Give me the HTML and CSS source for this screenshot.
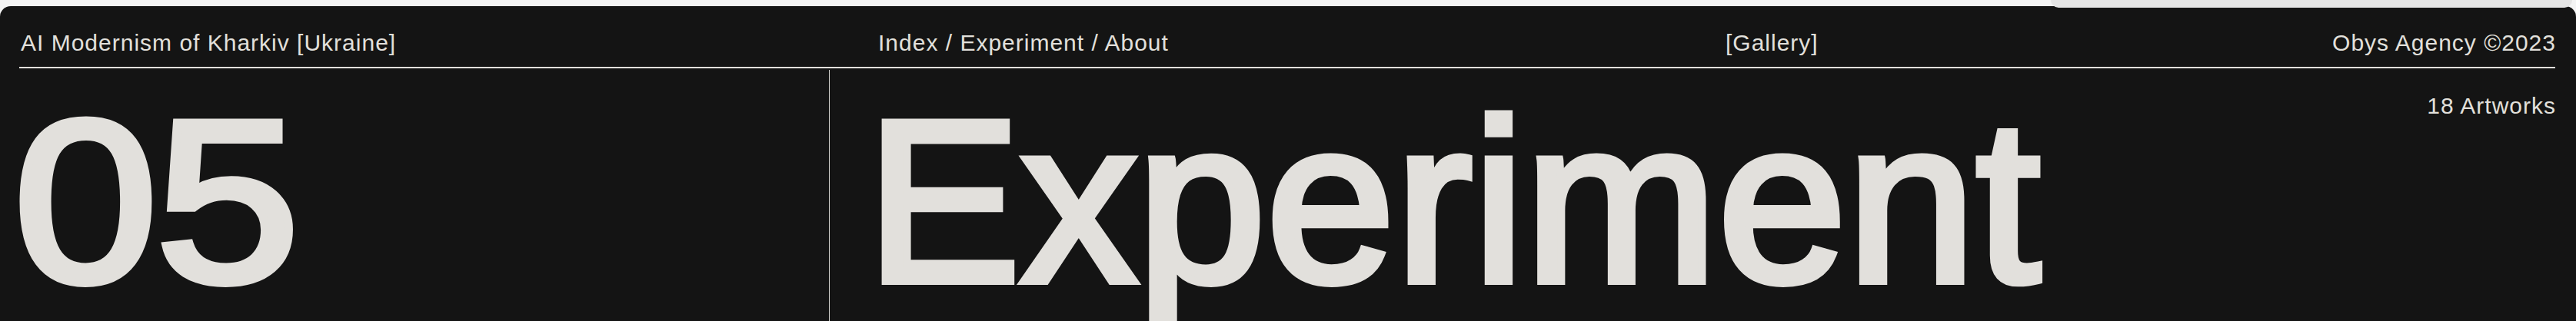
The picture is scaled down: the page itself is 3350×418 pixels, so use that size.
FILE: index.html
```html
<!DOCTYPE html>
<html lang="en">
<head>
<meta charset="utf-8">
<title>AI Modernism of Kharkiv — Experiment</title>
<link rel="stylesheet" href="styles.css">
</head>
<body>
<div class="page">
  <div class="peek"></div>
  <section class="panel">
    <header class="bar">
      <div class="bar-title">AI Modernism of Kharkiv [Ukraine]</div>
      <nav class="bar-nav">Index / Experiment / About</nav>
      <div class="bar-gallery">[Gallery]</div>
      <div class="bar-credit">Obys Agency ©2023</div>
    </header>
    <div class="hero">
      <div class="hero-num"><span class="hero-num-text">05</span></div>
      <div class="hero-main">
        <h1 class="hero-title">Experiment</h1>
        <div class="hero-count">18 Artworks</div>
      </div>
    </div>
  </section>
</div>
</body>
</html>
```

FILE: styles.css
```css
html, body {
  margin: 0;
  padding: 0;
}

body {
  background: #f4f4f4;
  height: 418px;
  overflow: hidden;
  font-family: "Liberation Sans", Arial, sans-serif;
}

.page {
  position: relative;
  padding-top: 8px;
}

.peek {
  position: absolute;
  top: 0;
  right: 5px;
  width: 678px;
  height: 10px;
  background: #e5e5e5;
  border-radius: 0 0 28px 28px;
  z-index: 2;
}

.panel {
  background: #141414;
  color: #e2e0dc;
  border-radius: 14px 14px 0 0;
  padding: 0 27px 0 25px;
  height: 410px;
  box-sizing: border-box;
}

.bar {
  display: grid;
  grid-template-columns: 1117px 1102px 1fr auto;
  padding: 33px 0 16px;
  border-bottom: 2px solid #e2e0dc;
  font-size: 30px;
  line-height: 30px;
  letter-spacing: 1px;
  white-space: nowrap;
}

.bar-title {
  padding-left: 2px;
}

.bar-credit {
  text-align: right;
  margin-right: -1px;
}

.hero {
  display: grid;
  grid-template-columns: 1054px 1fr;
  margin-top: 2px;
  height: 340px;
}

.hero-num {
  border-right: 1px solid #d8d6d2;
  padding-top: 21px;
  font-size: 300px;
  line-height: 300px;
  -webkit-text-stroke: 10px #e2e0dc;
}

.hero-num-text {
  display: inline-block;
  margin-left: -7px;
  letter-spacing: -2px;
  transform: scaleX(1.12);
  transform-origin: 0 0;
}

.hero-main {
  display: flex;
  justify-content: space-between;
  align-items: flex-start;
  padding-left: 48px;
}

.hero-title {
  margin: 0;
  padding-top: 21px;
  font-weight: 400;
  font-size: 300px;
  line-height: 300px;
  letter-spacing: 1px;
  white-space: nowrap;
  -webkit-text-stroke: 10px #e2e0dc;
}

.hero-count {
  padding-top: 32px;
  font-size: 30px;
  line-height: 30px;
  letter-spacing: 1px;
  margin-right: -1px;
  white-space: nowrap;
}
```
